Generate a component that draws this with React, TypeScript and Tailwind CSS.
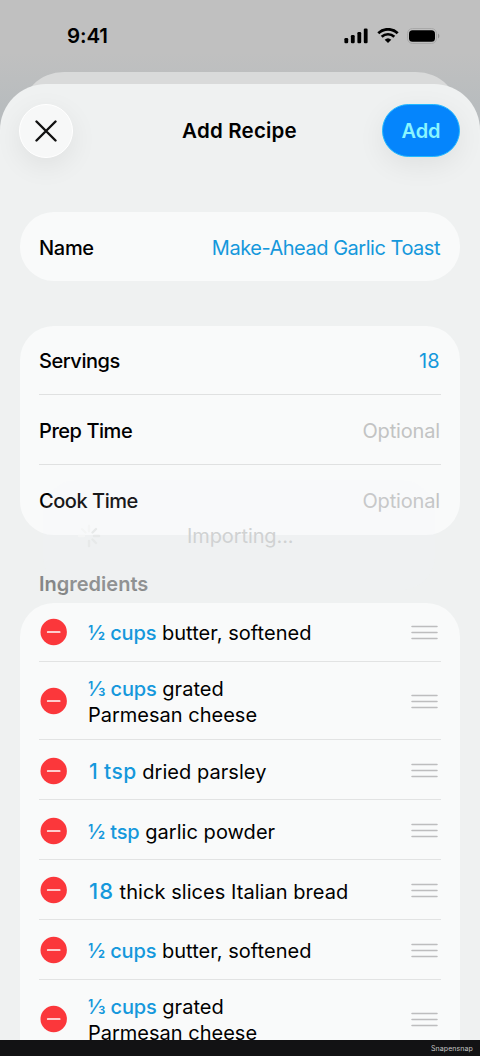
import React from "react";

const details = [
  { label: "Servings", value: "18", tracking: "tracking-[0.3px]", filled: true },
  { label: "Prep Time", value: "Optional", tracking: "tracking-[-0.15px]", filled: false },
  { label: "Cook Time", value: "Optional", tracking: "tracking-[-0.15px]", filled: false },
];

const ingredients = [
  { amount: "½ cups", lines: ["butter, softened"], height: "h-[58.5px] pt-px", spacing: "tracking-[-0.15px]" },
  { amount: "⅓ cups", lines: ["grated", "Parmesan cheese"], height: "h-[78.5px] pt-[2px]", spacing: "tracking-[-0.15px]" },
  { amount: "1 tsp", lines: ["dried parsley"], height: "h-[60px] pt-[2px]", spacing: "ml-[1px] text-[21px] tracking-[0.4px]" },
  { amount: "½ tsp", lines: ["garlic powder"], height: "h-[60px] pt-[2px]", spacing: "tracking-[-0.15px]" },
  { amount: "18", lines: ["thick slices Italian bread"], height: "h-[59.5px] pt-[2px]", spacing: "ml-[1px] text-[22px] tracking-[1px]" },
  { amount: "½ cups", lines: ["butter, softened"], height: "h-[60px] pt-[2px]", spacing: "tracking-[-0.15px]" },
  { amount: "⅓ cups", lines: ["grated", "Parmesan cheese"], height: "h-[78px] pt-[2px]", spacing: "tracking-[-0.15px]" },
];

const StatusBar = () => (
  <div className="flex h-[72px] shrink-0 items-center justify-between pl-[67px] pr-10">
    <span className="text-[20.5px] font-semibold leading-6 tracking-[-0.1px]">9:41</span>
    <div className="flex items-center">
      <svg width="24" height="16" viewBox="0 0 24 16">
        <rect x="0.4" y="10" width="3.8" height="5.2" rx="1.2" />
        <rect x="6.9" y="7" width="3.8" height="8.2" rx="1.2" />
        <rect x="13.4" y="4" width="3.8" height="11.2" rx="1.2" />
        <rect x="19.8" y="0.5" width="3.8" height="14.7" rx="1.2" />
      </svg>
      <svg className="ml-[9px]" width="22" height="16" viewBox="0 0 22 16">
        <path d="M1.3 5.2a14 14 0 0 1 19.4 0" fill="none" stroke="black" strokeWidth="2.8" />
        <path d="M4.7 8.8a9.1 9.1 0 0 1 12.6 0" fill="none" stroke="black" strokeWidth="2.7" />
        <path d="M7.7 11.7a4.8 4.8 0 0 1 6.6 0L11 14.9z" />
      </svg>
      <svg className="ml-[8px]" width="33" height="17" viewBox="0 0 33 17">
        <rect x="0.5" y="0.5" width="29" height="15" rx="5" fill="none" stroke="#a9a9a9" />
        <rect x="2" y="2.2" width="26" height="11.6" rx="3.5" />
        <path d="M31 5.5c1.8.7 1.8 4.3 0 5z" fill="#929292" />
      </svg>
    </div>
  </div>
);

const Header = () => (
  <div className="flex h-[53px] items-center justify-between pl-[19px] pr-5">
    <button className="flex h-[54px] w-[54px] items-center justify-center rounded-full border border-white bg-[#f7f8f8] shadow-[0_8px_28px_rgba(0,0,0,0.07)]">
      <svg width="22" height="22" viewBox="0 0 22 22" fill="none" stroke="#111" strokeWidth="2.4" strokeLinecap="round">
        <path d="M1.5 1.5l19 19M20.5 1.5l-19 19" />
      </svg>
    </button>
    <h1 className="ml-6 whitespace-nowrap pt-[2px] text-[20.5px] font-semibold tracking-[0.2px]">Add Recipe</h1>
    <button className="h-[53px] w-[78px] rounded-full border border-[#22b9ff] bg-[#0585fc] text-[20px] font-semibold text-[#8af5ff] shadow-[0_8px_28px_rgba(0,0,0,0.07)]">
      Add
    </button>
  </div>
);

const RemoveIcon = () => (
  <svg className="shrink-0" width="28" height="28" viewBox="0 0 28 28">
    <circle cx="14.7" cy="14" r="13.2" fill="#fb373b" />
    <path d="M8.7 14h12" stroke="white" strokeWidth="1.7" strokeLinecap="round" />
  </svg>
);

const DragHandle = () => (
  <svg className="ml-auto mr-[3px] shrink-0" width="27" height="15" viewBox="0 0 27 15" stroke="#bdbdbe" strokeWidth="1.5" strokeLinecap="round">
    <path d="M1 1.5h25M1 7.5h25M1 13.5h25" />
  </svg>
);

const Importing = () => (
  <div className="pointer-events-none absolute left-[43px] top-[396px] flex h-[110px] w-[392px] items-center rounded-[34px] bg-[#f4f6fb]/10">
    <svg className="ml-[34px] mt-[2px]" width="24" height="24" viewBox="0 0 24 24" fill="none" strokeWidth="2.4" strokeLinecap="round">
      <path d="M12 2v5M5 5l3.5 3.5M2 12h5" stroke="#f4f5f5" />
      <path d="M19 5l-3.5 3.5M17 12h5M15.5 15.5l3.5 3.5M12 17v5" stroke="#e7e9e9" />
    </svg>
    <span className="ml-[86px] mt-[2px] whitespace-nowrap text-[20px] tracking-[-0.1px] text-[#d0d2d2]">Importing...</span>
  </div>
);

const App = () => {
  return (
    <div className="flex h-[1056px] w-[480px] flex-col overflow-hidden bg-gradient-to-b from-[#c0c0c0] from-5% to-[#b8bcbe] to-10% font-['Inter','Liberation_Sans',sans-serif] text-black">
      <StatusBar />
      <div className="mx-5 h-[50px] shrink-0 rounded-t-[44px] bg-[#d9dada]" />
      <div className="relative -mt-[38px] min-h-0 flex-1 overflow-hidden rounded-t-[46px] bg-[#eff1f1] pt-5">
        <Header />

        <div className="mx-5 mt-[55px] flex h-[69px] items-center justify-between whitespace-nowrap rounded-[34px] bg-[#f9fafa] pl-[19px] pr-5 pt-[2px] text-[20px]">
          <span className="font-medium tracking-[-0.3px]">Name</span>
          <span className="tracking-[-0.48px] text-[#1598dc]">Make-Ahead Garlic Toast</span>
        </div>

        <div className="mx-5 mt-[45px] rounded-[34px] bg-[#f9fafa] px-[19px] text-[20px]">
          {details.map((item, index) => (
            <div
              key={index}
              className={`flex items-center justify-between whitespace-nowrap pr-px ${
                index < details.length - 1 ? "border-b border-[#e0e1e1]" : ""
              } ${index === 0 ? "h-[69px] pt-[2px]" : "h-[69.75px]"} ${index === 1 ? "pt-[3px]" : "pt-[2px]"}`}
            >
              <span className="font-medium tracking-[-0.45px]">{item.label}</span>
              <span className={`${item.tracking} ${item.filled ? "text-[#1598dc]" : "text-[#c2c3c3]"}`}>
                {item.value}
              </span>
            </div>
          ))}
        </div>

        <h2 className="ml-[39px] mt-[33.5px] h-[35px] pt-px text-[20px] font-semibold leading-[30px] text-[#858787]">
          Ingredients
        </h2>

        <div className="mx-5 rounded-t-[34px] bg-[#f9fafa] px-[19px] text-[20px]">
          {ingredients.map((item, index) => (
            <div key={index} className={`flex items-center border-b border-[#e2e3e3] ${item.height}`}>
              <RemoveIcon />
              <div className="ml-[21px] whitespace-nowrap pt-[2px] leading-[26px]">
                <p>
                  <span className={`font-medium text-[#1598dc] ${item.spacing}`}>{item.amount}</span>{" "}
                  <span className="tracking-[0.05px]">{item.lines[0]}</span>
                </p>
                {item.lines[1] && <p>{item.lines[1]}</p>}
              </div>
              <DragHandle />
            </div>
          ))}
        </div>

        <Importing />
      </div>
      <div className="flex h-[16.5px] shrink-0 items-center justify-end bg-[#121214] pr-[7px] pt-[3px] text-[7px] tracking-[0.1px] text-[#c5c5c5]">
        Snapensnap
      </div>
    </div>
  );
};

export default App;
